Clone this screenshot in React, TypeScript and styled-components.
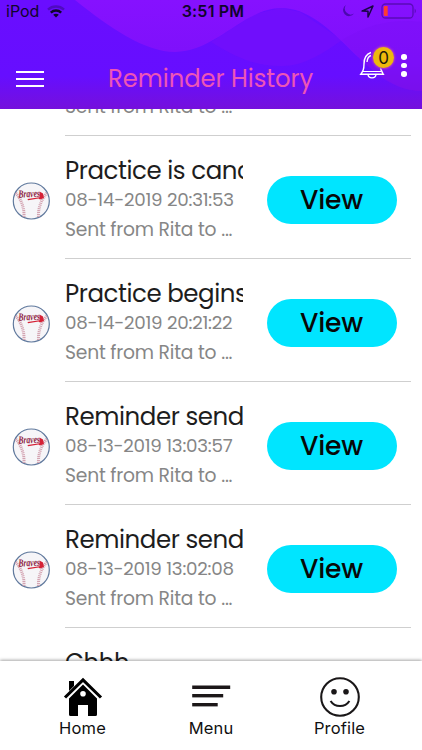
import React from 'react';
import styled, { createGlobalStyle } from 'styled-components';

type Reminder = {
  id: number;
  title: string;
  date: string;
};

const reminders: Reminder[] = [
  { id: 2, title: 'Practice is cancelled', date: '08-14-2019 20:31:53' },
  { id: 3, title: 'Practice begins', date: '08-14-2019 20:21:22' },
  { id: 4, title: 'Reminder send', date: '08-13-2019 13:03:57' },
  { id: 5, title: 'Reminder send', date: '08-13-2019 13:02:08' },
];

function Waves() {
  return (
    <WaveArt viewBox="0 0 422 109" preserveAspectRatio="none">
      <defs>
        <linearGradient id="base" x1="0" y1="0" x2="0" y2="1">
          <stop offset="0" stopColor="#6a0dff" />
          <stop offset="0.7" stopColor="#660eff" />
          <stop offset="1" stopColor="#7510dc" />
        </linearGradient>
        <linearGradient id="crest" x1="0" y1="0" x2="0" y2="1">
          <stop offset="0" stopColor="#8611ff" />
          <stop offset="0.7" stopColor="#7d10fa" />
          <stop offset="1" stopColor="#7810e6" />
        </linearGradient>
      </defs>
      <rect width="422" height="109" fill="url(#base)" />
      <path
        d="M211 42C240 60 258 66 281 66C305 66 325 52 342 40L300 12L281 8L255 14Z"
        fill="#7410fa"
        opacity="0.65"
      />
      <path
        d="M75 0C110 28 145 52 175 52C215 52 245 8 281 8C335 8 365 91 422 91V0Z"
        fill="url(#crest)"
      />
      <path d="M342 40C370 23 395 19 422 22V91C385 91 366 63 342 40Z" fill="#7a10f4" opacity="0.4" />
    </WaveArt>
  );
}

function Baseball() {
  return (
    <svg width="38" height="38" viewBox="0 0 38 38">
      <circle cx="19.3" cy="19" r="18" fill="#f6f5f8" stroke="#60799d" strokeWidth="1.2" />
      <g fill="none" stroke="#d3a3b1" strokeWidth="3" strokeDasharray="1.1 0.8">
        <path d="M3.8 11C9 17 12.5 26 12 35" />
        <path d="M34.8 11C29.5 17 26 26 26.5 35" />
      </g>
      <LogoText x="6.5" y="15.3" textLength="21.5" lengthAdjust="spacingAndGlyphs" transform="rotate(-2 16 14)">
        Braves
      </LogoText>
      <path d="M15.5 17L27.5 15.2V9.5L31 11.5L32 16L28 17.4L26.5 16.5L16 18.3Z" fill="#d52136" />
    </svg>
  );
}

function BellIcon() {
  return (
    <svg width="26" height="29" viewBox="0 0 26 29" fill="none" stroke="#fff" strokeWidth="1.4">
      <path d="M12 1.5C6 3.5 5 8 5 13C5 18.5 4 20 1.7 23.3H24.3C22 20 21.2 18 21 13" />
      <path d="M3.5 20.5H22.5" strokeWidth="1" />
      <path d="M8 11C8.3 7.5 9.5 5.5 12 4.5" />
      <path d="M9 23.5C9.5 28 16.5 28 17 23.5" />
    </svg>
  );
}

function HomeIcon() {
  return (
    <svg width="40" height="40" viewBox="0 0 40 40">
      <path d="M6 4H11V9L6 14Z" />
      <path d="M2 20.5L20 3L38 20.5" fill="none" stroke="#000" strokeWidth="3.1" />
      <path
        fillRule="evenodd"
        d="M20 7.6L34 21.5V37.5Q34 39 32.5 39H25V28H15V39H7.5Q6 39 6 37.5V21.5ZM20 14A2.8 2.8 0 1 0 20 19.6A2.8 2.8 0 1 0 20 14Z"
      />
    </svg>
  );
}

function MenuIcon() {
  return (
    <svg width="40" height="40" viewBox="0 0 40 40" fill="#1c1718">
      <rect x="1.2" y="8.5" width="38" height="3.5" />
      <rect x="1.2" y="17" width="31" height="3.4" />
      <rect x="1.2" y="26" width="25.5" height="3.4" />
    </svg>
  );
}

function ProfileIcon() {
  return (
    <svg width="40" height="40" viewBox="0 0 40 40" fill="none" stroke="#1a1718" strokeWidth="2.1">
      <circle cx="20" cy="20" r="18.8" />
      <circle cx="14" cy="14.7" r="2.8" fill="#1a1718" stroke="none" />
      <circle cx="26" cy="14.7" r="2.8" fill="#1a1718" stroke="none" />
      <path d="M10.6 24C15 30.7 25 30.7 29.4 24" />
    </svg>
  );
}

export default function App() {
  return (
    <Screen>
      <GlobalStyle />
      <Header>
        <Waves />
        <StatusBar>
          <Carrier>
            iPod
            <svg width="18" height="13" viewBox="0 0 18 13" fill="none" stroke="#10052d" strokeWidth="2.4">
              <path d="M1 4.7C5.5 0.5 12.5 0.5 17 4.7" opacity="0.3" />
              <path d="M3.8 7.6C6.8 4.8 11.2 4.8 14.2 7.6" />
              <path d="M9 12.5L6.2 9.7C7.7 8.4 10.3 8.4 11.8 9.7Z" fill="#10052d" stroke="none" />
            </svg>
          </Carrier>
          <Clock>3:51 PM</Clock>
          <StatusIcons>
            <svg width="12" height="12" viewBox="0 0 12 12">
              <path d="M4 0A6 6 0 1 0 12 8.6A6 6 0 0 1 4 0Z" fill="#4c09ae" />
            </svg>
            <svg width="13" height="13" viewBox="0 0 13 13">
              <path d="M1 6.1L12 1L7 12V6.3Z" fill="none" stroke="#190546" strokeWidth="1.5" strokeLinejoin="round" />
            </svg>
            <svg width="36" height="16" viewBox="0 0 36 16">
              <rect x="1" y="1" width="31" height="14" rx="3.5" fill="none" stroke="#590bb8" strokeWidth="1.3" />
              <path d="M4 3H6.7V13H4Q2.7 13 2.7 11.7V4.3Q2.7 3 4 3Z" fill="#ff3b30" />
              <path d="M33.7 5.5Q36 8 33.7 10.5Z" fill="#590bb8" />
            </svg>
          </StatusIcons>
        </StatusBar>
        <Toolbar>
          <MenuButton aria-label="Open menu">
            <Bar />
            <Bar />
            <Bar />
          </MenuButton>
          <Title>Reminder History</Title>
          <Actions>
            <Notifications aria-label="Notifications">
              <BellIcon />
              <Badge>0</Badge>
            </Notifications>
            <MoreButton aria-label="More">
              <Dot />
              <Dot />
              <Dot />
            </MoreButton>
          </Actions>
        </Toolbar>
      </Header>

      <Content>
        <ScrolledRow>
          <Sender>Sent from Rita to ...</Sender>
        </ScrolledRow>
        {reminders.map((item) => (
          <Row key={item.id}>
            <Avatar>
              <Baseball />
            </Avatar>
            <RowBody>
              <Details>
                <Name>{item.title}</Name>
                <DateText>{item.date}</DateText>
                <Sender>Sent from Rita to ...</Sender>
              </Details>
              <ViewButton>View</ViewButton>
            </RowBody>
          </Row>
        ))}
        <NextRow>
          <Name>Ghhh</Name>
        </NextRow>
      </Content>

      <TabBar>
        <Tab>
          <HomeIcon />
          <TabLabel>Home</TabLabel>
        </Tab>
        <Tab>
          <MenuIcon />
          <TabLabel>Menu</TabLabel>
        </Tab>
        <Tab>
          <ProfileIcon />
          <TabLabel>Profile</TabLabel>
        </Tab>
      </TabBar>
    </Screen>
  );
}

// Styled components

const GlobalStyle = createGlobalStyle`
  * {
    box-sizing: border-box;
  }

  body {
    margin: 0;
    font-family: Poppins, Inter, sans-serif;
  }

  button {
    border: none;
    padding: 0;
    background: none;
    font-family: inherit;
  }

  svg {
    display: block;
    flex-shrink: 0;
  }
`;

const Screen = styled.div`
  display: flex;
  flex-direction: column;
  width: 422px;
  height: 750px;
  overflow: hidden;
  background: #fff;
`;

const Header = styled.header`
  position: relative;
  height: 109px;
  flex-shrink: 0;
`;

const WaveArt = styled.svg`
  position: absolute;
  inset: 0;
  width: 100%;
  height: 100%;
`;

const StatusBar = styled.div`
  position: relative;
  display: grid;
  grid-template-columns: 1fr auto 1fr;
  align-items: center;
  height: 22px;
  padding: 0 5px 0 6px;
  color: #10052d;
  font-family: Inter, sans-serif;
`;

const Carrier = styled.div`
  display: flex;
  align-items: center;
  gap: 8px;
  font-size: 16px;
`;

const Clock = styled.div`
  padding-left: 3px;
  font-size: 16px;
  font-weight: 600;
  letter-spacing: 0.2px;
`;

const StatusIcons = styled.div`
  display: flex;
  align-items: center;
  justify-content: flex-end;
  gap: 7px;
`;

const Toolbar = styled.div`
  position: relative;
  display: grid;
  grid-template-columns: 92px 1fr 92px;
  height: 87px;
  padding: 0 0 0 16px;
`;

const MenuButton = styled.button`
  display: flex;
  flex-direction: column;
  gap: 5px;
  width: 28px;
  height: 17px;
  margin-top: 49px;
`;

const Bar = styled.span`
  width: 28px;
  height: 2px;
  background: #fff;
`;

const Title = styled.h1`
  margin: 40px 0 0;
  font-size: 24.3px;
  font-weight: 400;
  line-height: 34px;
  letter-spacing: -0.05px;
  white-space: nowrap;
  color: #ee55b5;
`;

const Actions = styled.div`
  display: flex;
  align-items: flex-start;
  gap: 16px;
  padding: 29px 0 0 29px;
`;

const Notifications = styled.button`
  position: relative;
  width: 26px;
  height: 29px;
`;

const Badge = styled.span`
  position: absolute;
  top: -4px;
  left: 14px;
  width: 21px;
  height: 21px;
  border-radius: 50%;
  background: #edb90d;
  box-shadow: 0 0 2px 1px #b33cc0;
  color: #21180a;
  font-family: Inter, sans-serif;
  font-size: 17px;
  line-height: 22px;
  text-align: center;
`;

const MoreButton = styled.button`
  display: flex;
  flex-direction: column;
  gap: 3px;
  margin-top: 3px;
`;

const Dot = styled.span`
  width: 5.5px;
  height: 5.5px;
  border-radius: 50%;
  background: #fff;
`;

const Content = styled.main`
  height: 552px;
  overflow: hidden;
`;

const ScrolledRow = styled.div`
  display: flex;
  align-items: flex-end;
  height: 27px;
  margin: 0 11px 0 65px;
  padding-bottom: 15px;
  border-bottom: 1px solid #cfcfcf;
`;

const Row = styled.div`
  display: flex;
  height: 123px;
  padding: 0 11px 0 12px;
`;

const NextRow = styled.div`
  padding: 18px 0 0 65px;
`;

const Avatar = styled.div`
  display: flex;
  align-items: center;
  width: 53px;
  padding-top: 7px;
`;

const RowBody = styled.div`
  display: flex;
  flex: 1;
  align-items: flex-start;
  justify-content: space-between;
  padding-right: 14px;
  border-bottom: 1px solid #cfcfcf;
`;

const Details = styled.div`
  width: 178px;
  padding-top: 18px;
  overflow: hidden;
  white-space: nowrap;
`;

const Name = styled.div`
  font-size: 24.5px;
  line-height: 33px;
  letter-spacing: -0.45px;
  color: #1d1d1d;
`;

const DateText = styled.div`
  font-size: 18.3px;
  line-height: 25px;
  letter-spacing: -0.25px;
  color: #868686;
`;

const Sender = styled.div`
  padding-top: 4px;
  font-size: 18.7px;
  line-height: 27px;
  letter-spacing: -0.2px;
  color: #868686;
`;

const ViewButton = styled.button`
  width: 130px;
  height: 48px;
  margin-top: 40px;
  padding-right: 1px;
  border-radius: 24px;
  background: #00e5ff;
  color: #080808;
  font-size: 26.5px;
  font-weight: 500;
  letter-spacing: -0.1px;
`;

const TabBar = styled.nav`
  position: relative;
  display: grid;
  grid-template-columns: repeat(3, 128.5px);
  justify-content: center;
  height: 89px;
  padding-top: 16px;
  background: #fff;
  box-shadow: 0 -1px 3px rgba(0, 0, 0, 0.35);
`;

const Tab = styled.div`
  display: flex;
  flex-direction: column;
  align-items: center;
`;

const TabLabel = styled.span`
  font-family: Inter, sans-serif;
  font-size: 16.5px;
  line-height: 23px;
  letter-spacing: 0.15px;
  color: #111;
`;

const LogoText = styled.text`
  font-family: 'Liberation Serif', serif;
  font-size: 11px;
  font-style: italic;
  font-weight: 700;
  fill: #8d1c43;
`;
